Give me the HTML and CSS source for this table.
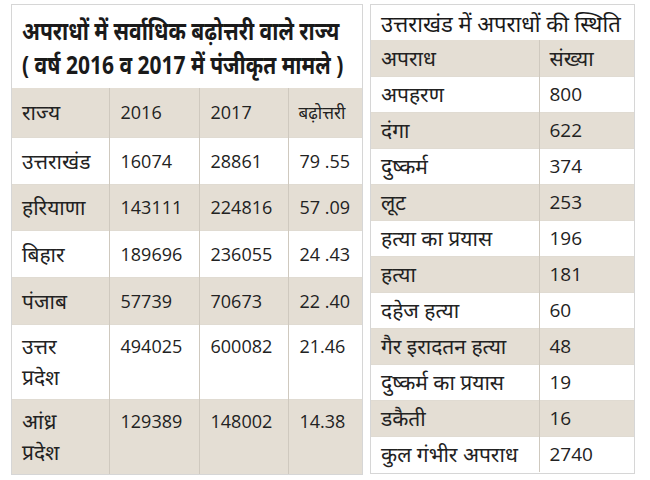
FILE: index.html
```html
<!DOCTYPE html>
<html lang="hi">
<head>
<meta charset="utf-8">
<link rel="stylesheet" href="styles.css">
</head>
<body>
<div class="page">
  <section class="panel left">
    <h1 class="title">
      <span class="tline">अपराधों में सर्वाधिक बढ़ोत्तरी वाले राज्य</span>
      <span class="tline">( वर्ष 2016 व 2017 में पंजीकृत मामले )</span>
    </h1>
    <table class="tbl tbl-left">
      <colgroup><col class="c1"><col class="c2"><col class="c3"><col class="c4"></colgroup>
      <tr class="shade h49"><td>राज्य</td><td class="num">2016</td><td class="num">2017</td><td class="sm">बढ़ोत्तरी</td></tr>
      <tr class="h47"><td>उत्तराखंड</td><td class="num">16074</td><td class="num">28861</td><td class="num">79 .55</td></tr>
      <tr class="shade h46"><td>हरियाणा</td><td class="num">143111</td><td class="num">224816</td><td class="num">57 .09</td></tr>
      <tr class="h47"><td>बिहार</td><td class="num">189696</td><td class="num">236055</td><td class="num">24 .43</td></tr>
      <tr class="shade h47"><td>पंजाब</td><td class="num">57739</td><td class="num">70673</td><td class="num">22 .40</td></tr>
      <tr class="h75 top"><td>उत्तर<br>प्रदेश</td><td class="num">494025</td><td class="num">600082</td><td class="num">21.46</td></tr>
      <tr class="shade h75 top"><td>आंध्र<br>प्रदेश</td><td class="num">129389</td><td class="num">148002</td><td class="num">14.38</td></tr>
    </table>
  </section>
  <section class="panel right">
    <h2 class="subtitle">उत्तराखंड में अपराधों की स्थिति</h2>
    <table class="tbl tbl-right">
      <colgroup><col class="r1"><col class="r2"></colgroup>
      <tr class="shade"><td>अपराध</td><td>संख्या</td></tr>
      <tr><td>अपहरण</td><td class="num">800</td></tr>
      <tr class="shade"><td>दंगा</td><td class="num">622</td></tr>
      <tr><td>दुष्कर्म</td><td class="num">374</td></tr>
      <tr class="shade"><td>लूट</td><td class="num">253</td></tr>
      <tr><td>हत्या का प्रयास</td><td class="num">196</td></tr>
      <tr class="shade"><td>हत्या</td><td class="num">181</td></tr>
      <tr><td>दहेज हत्या</td><td class="num">60</td></tr>
      <tr class="shade"><td>गैर इरादतन हत्या</td><td class="num">48</td></tr>
      <tr><td>दुष्कर्म का प्रयास</td><td class="num">19</td></tr>
      <tr class="shade"><td>डकैती</td><td class="num">16</td></tr>
      <tr><td>कुल गंभीर अपराध</td><td class="num">2740</td></tr>
    </table>
  </section>
</div>
</body>
</html>
```
FILE: styles.css
```css
* { box-sizing: border-box; }
html, body { margin: 0; padding: 0; background: #fff; }
body {
  font-family: "Open Sans", "Noto Sans", "Noto Sans Devanagari", sans-serif;
  color: #222;
}
.page {
  display: flex;
  gap: 7px;
  padding: 4px 0 0 11px;
  align-items: flex-start;
}
.panel {
  border: 1px solid #d6d6d6;
  background: #fff;
}
.left { width: 352px; height: 471px; }
.right { width: 265px; height: 470px; }

.title {
  margin: 0;
  height: 83px;
  padding: 8px 0 0 10px;
  font-size: 25px;
  line-height: 34px;
  font-weight: 700;
  color: #1a1a1a;
}
.tline {
  display: block;
  white-space: nowrap;
  transform: scaleX(0.84);
  transform-origin: left center;
}
.subtitle {
  margin: 0;
  height: 35px;
  padding: 3px 0 0 10px;
  font-size: 22px;
  line-height: 30px;
  font-weight: 400;
  color: #1a1a1a;
}
.tbl {
  width: 100%;
  border-collapse: collapse;
  table-layout: fixed;
}
.tbl td {
  padding: 0 0 0 10px;
  font-size: 21px;
  color: #222;
  white-space: nowrap;
  border-left: 1px solid #cfc9bf;
  border-top: 1px solid #e0dbd2;
  vertical-align: middle;
}
.tbl td.num { font-size: 18px; }
.tbl-left td.num { padding-left: 11px; }
.tbl-right td.num { font-size: 19px; }
.tbl td:first-child { border-left: none; }
.tbl tr:first-child td { border-top: none; }
.shade td { background: #e4ded4; }
.c1 { width: 97px; }
.c2 { width: 90px; }
.c3 { width: 89px; }
.c4 { width: 74px; }
.r1 { width: 168px; }
.r2 { width: 95px; }
.h49 { height: 49px; }
.h47 { height: 47px; }
.h46 { height: 46px; }
.h75 { height: 75px; }
.top td { vertical-align: top; padding-top: 6px; line-height: 31px; }
.tbl td.sm { font-size: 17px; }
.tbl-right tr { height: 36px; }
.tbl-right td { padding-left: 10px; }
```
